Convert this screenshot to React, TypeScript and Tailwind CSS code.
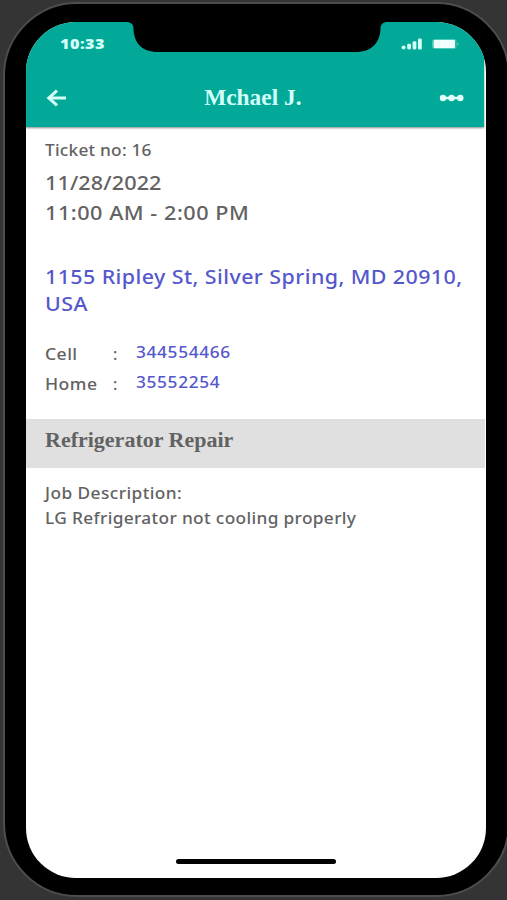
const sans = 'font-["Noto_Sans","Open_Sans",sans-serif]';
const serif = 'font-["Liberation_Serif",serif]';

function StatusBar() {
  return (
    <div className="flex h-[44px] items-center pl-[34px] pr-[24px]">
      <span className='origin-left scale-x-[1.12] font-["Open_Sans",sans-serif] text-[14.5px] font-extrabold leading-5 tracking-[0.4px] text-[#d3fff8]'>
        10:33
      </span>
      <svg className="ml-auto" width="62" height="14" viewBox="0 0 62 14" fill="#d3fff8">
        <circle cx="5.6" cy="10.6" r="2" />
        <rect x="9.2" y="6.8" width="3.8" height="5.6" rx="1.4" />
        <rect x="14.6" y="4.2" width="3.8" height="8.2" rx="1.4" />
        <rect x="20" y="1.6" width="3.8" height="10.8" rx="1.2" />
        <rect x="34.5" y="2.5" width="23.500" height="9" rx="2" fill="none" stroke="#5fd0c2" strokeWidth="0.8" />
        <rect x="35.500" y="3" width="21.5" height="8" rx="1" fill="#effffd" />
        <path d="M59.5 5.5v3l1.600-1.500z" fill="#5fd0c2" />
      </svg>
    </div>
  );
}

function NavBar() {
  return (
    <div className="flex h-[60px] items-center justify-between pl-[20px] pr-[19px] pt-1">
      <svg width="21" height="18" viewBox="0 0 21 18" fill="none" stroke="#d3fff8" strokeWidth="3">
        <path d="M11 1.600 2.800 9l8.200 7.400M3.200 9H20" />
      </svg>
      <h1 className={`${serif} origin-center scale-x-[1.04] text-[22.5px] font-bold leading-7 text-[#d3fff8]`}>
        Mchael J.
      </h1>
      <svg width="26" height="8" viewBox="0 0 26 8" fill="#e2fffb">
        <path d="M4 2.700h18v2.600H4z" />
        <circle cx="4" cy="4" r="3.2" />
        <circle cx="12.500" cy="4" r="3.2" />
        <circle cx="21.300" cy="4" r="3.2" />
      </svg>
    </div>
  );
}

function Phone({ label, value }: { label: string; value: string }) {
  return (
    <div className="flex h-[30px] text-[16px] font-medium leading-6">
      <span className="w-[68px] pt-[2px]">
        <span className="inline-block origin-left scale-x-[1.1] tracking-[0.4px]">{label}</span>
      </span>
      <span className="w-[23px] pt-[2px]">:</span>
      <a className="origin-left scale-x-[1.08] tracking-[0.6px] text-[#5558cc]">{value}</a>
    </div>
  );
}

export default function App() {
  return (
    <div className="h-[900px] w-[507px] overflow-hidden bg-[#343434]">
      <div className="h-[900px] w-[510px] pl-[3px] pt-[2px]">
        <div className="h-[895px] w-[507px] rounded-[74px] border-2 border-[#4d4d4d] bg-black pl-[21px] pt-[18px]">
          <main
            className={`${sans} relative h-[856px] w-[460px] overflow-hidden rounded-[50px] bg-white font-medium text-[#626262]`}
          >
            <header className="mr-[2px] h-[105px] bg-[#02a998] shadow-[0_1px_2px_#8a8a8a]">
              <StatusBar />
              <NavBar />
            </header>
            <svg className="absolute left-[102px] top-0" width="260" height="31" viewBox="0 0 260 31">
              <path d="M0 0C4 1 5.500 3 5.500 7C6 21 14 30 30 30H228C243 30 252 21 252.500 7C252.500 3 254 1 258 0Z" />
            </svg>
            <section className="whitespace-nowrap pl-[19px]">
              <p className="origin-left scale-x-[1.08] pt-[11px] text-[16px] leading-6 tracking-[0.2px]">
                Ticket no: 16
              </p>
              <p className="mt-[6px] origin-left scale-x-[1.08] text-[20px] leading-[30px] tracking-[0.1px]">
                11/28/2022
              </p>
              <p className="origin-left scale-x-[1.08] text-[20px] leading-[30px] tracking-[0.5px]">
                11:00 AM - 2:00 PM
              </p>
              <p className="mt-[35px] origin-left scale-x-[1.07] text-[20px] leading-[27px] tracking-[0.4px] text-[#5558cc]">
                1155 Ripley St, Silver Spring, MD 20910,
                <br />
                USA
              </p>
              <div className="mt-[23px]">
                <Phone label="Cell" value="344554466" />
                <Phone label="Home" value="35552254" />
              </div>
            </section>
            <div className="mr-px mt-[19px] h-[49px] bg-[#e0e0e0] pl-[19px] pt-[7px]">
              <h2 className={`${serif} origin-left scale-x-[1.1] text-[20px] font-bold leading-7`}>
                Refrigerator Repair
              </h2>
            </div>
            <section className="whitespace-nowrap pl-[18.5px] pt-[13px] text-[16px] leading-[25px]">
              <p className="origin-left scale-x-[1.08] tracking-[0.4px]">Job Description:</p>
              <p className="origin-left scale-x-[1.08] tracking-[0.32px]">LG Refrigerator not cooling properly</p>
            </section>
            <div className="absolute bottom-[14px] left-[150px] h-[5px] w-[160px] rounded-full bg-black" />
          </main>
        </div>
      </div>
    </div>
  );
}
